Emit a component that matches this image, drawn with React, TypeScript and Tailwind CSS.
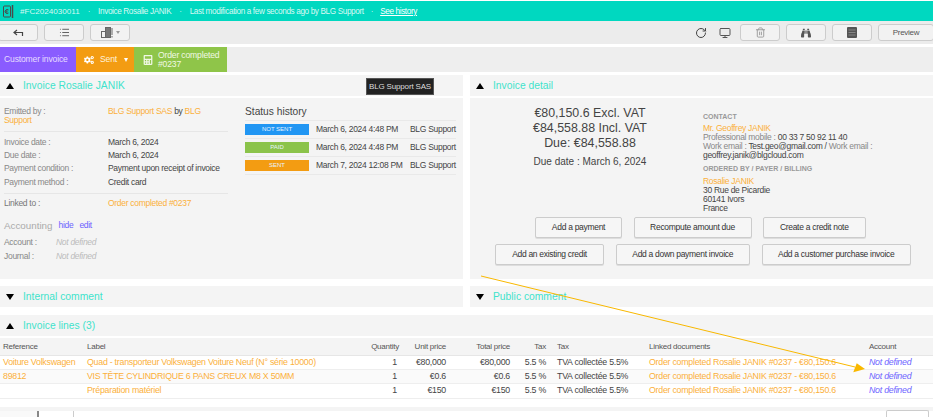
import React from 'react';
import { List, RotateCw, Monitor, Trash2 } from 'lucide-react';
import { FaBinoculars, FaCalculator, FaCogs } from 'react-icons/fa';

const SectionHead = ({ title, open }: { title: string; open?: boolean }) => (
  <div className="h-[21px] bg-[#f4f4f4] flex items-center pl-[6px] gap-[9px]">
    <span className={open ? 'w-0 h-0 border-x-[4px] border-x-transparent border-b-[6px] border-b-black' : 'w-0 h-0 border-x-[4px] border-x-transparent border-t-[6px] border-t-black'} />
    <span className="text-[10.3px] tracking-normal text-[#3fe3cb]">{title}</span>
  </div>
);

const ToolBtn = ({ children, w = 'w-[40px]' }: { children: React.ReactNode; w?: string }) => (
  <div className={`${w} h-[17px] border border-[#ccc] rounded-[3px] bg-[#f2f2f2] flex items-center justify-center text-[#555]`}>{children}</div>
);

const InfoRow = ({ label, children }: { label: string; children: React.ReactNode }) => (
  <div className="flex h-[13.3px] items-center whitespace-nowrap">
    <span className="w-[104px] text-[#888]">{label}</span>
    <span className="text-[#444]">{children}</span>
  </div>
);

const History = ({ badge, color, date }: { badge: string; color: string; date: string }) => (
  <div className="flex items-center h-[18px] border-b border-[#e9e9e9] text-[#444] whitespace-nowrap">
    <span className={`${color} w-[64px] h-[11px] text-[#e8f4ff] text-[6px] tracking-normal flex items-center justify-center`}>{badge}</span>
    <span className="ml-[7px] w-[94px]">{date}</span>
    <span>BLG Support</span>
  </div>
);

const Btn = ({ label, w }: { label: string; w: string }) => (
  <div className={`${w} h-[21px] border border-[#ccc] rounded-[2px] bg-[#f6f6f6] flex items-center justify-center text-[#333] shadow-[0_1px_0_#ddd] whitespace-nowrap`}>{label}</div>
);

const lines = [
  { ref: 'Voiture Volkswagen', label: 'Quad - transporteur Volkswagen Voiture Neuf (N° série 10000)', unit: '€80,000', bg: 'bg-white' },
  { ref: '89812', label: 'VIS TÊTE CYLINDRIQUE 6 PANS CREUX M8 X 50MM', unit: '€0.6', bg: 'bg-[#fafafa]' },
  { ref: '', label: 'Préparation matériel', unit: '€150', bg: 'bg-white' },
];

export default function App() {
  return (
    <div className="relative w-[933px] h-[417px] overflow-hidden bg-white text-[8.5px] tracking-[-0.035em] leading-[9px] font-['Liberation_Sans',Arial,sans-serif]">
      {/* Top bar */}
      <div className="mt-[1px] h-[20px] bg-[#00d8c0] flex items-center pl-[3px] text-[8.2px] tracking-[-0.045em] whitespace-nowrap">
        <svg width="11" height="15" viewBox="0 0 11 15" fill="none" stroke="#4a4a4a" strokeWidth="1" className="mr-[6px]">
          <rect x="0.5" y="2" width="7" height="11" rx="1" />
          <path d="M9.5 1v13" strokeWidth="1.5" />
          <path d="M5.5 6a2 2 0 1 0 0 3M2.5 7h2M2.5 8h2" />
        </svg>
        <span className="text-[#d8f8f3] text-[8.1px] tracking-normal">#FC2024030011</span>
        <span className="mx-[8px] text-[#bff3ea]">·</span>
        <span className="text-[#d8f8f3]">Invoice Rosalie JANIK</span>
        <span className="mx-[8px] text-[#bff3ea]">·</span>
        <span className="text-[#d8f8f3]">Last modification a few seconds ago by BLG Support</span>
        <span className="mx-[7px] text-[#bff3ea]">·</span>
        <span className="underline text-white">See history</span>
      </div>
      {/* Toolbar */}
      <div className="h-[23px] bg-[#ececec] flex items-center justify-between">
        <div className="flex items-center gap-[6px] -ml-[2px]">
          <ToolBtn>
            <svg width="11" height="8" viewBox="0 0 11 8" fill="none" stroke="#444" strokeWidth="1.2">
              <path d="M4 1L1 3.5L4 6M1 3.5h8.5V7" />
            </svg>
          </ToolBtn>
          <ToolBtn><List size={11} /></ToolBtn>
          <ToolBtn>
            <svg width="12" height="11" viewBox="0 0 12 11" fill="none" stroke="#666" strokeWidth="1">
              <rect x="0.5" y="4.5" width="4" height="6" />
              <rect x="4.5" y="0.5" width="5" height="10" fill="#777" />
              <path d="M11 1v7M11 9v1.5" />
            </svg>
            <span className="ml-[3px] w-0 h-0 border-x-[2.5px] border-x-transparent border-t-[3px] border-t-[#999]" />
          </ToolBtn>
        </div>
        <div className="flex items-center">
          <RotateCw size={12} strokeWidth={2} className="text-[#444] mr-[12px]" />
          <Monitor size={12} className="text-[#555] mr-[9px]" />
          <div className="flex gap-[6px] -mr-[1px]">
            <ToolBtn><Trash2 size={11} className="text-[#999]" /></ToolBtn>
            <ToolBtn><FaBinoculars size={10} /></ToolBtn>
            <ToolBtn>
              <svg width="10" height="11" viewBox="0 0 10 11" fill="#555">
                <rect x="0" y="0" width="10" height="11" rx="1" />
                <path d="M1.5 3h7M1.5 5.5h7M1.5 8h7" stroke="#aaa" strokeWidth="0.6" />
              </svg>
            </ToolBtn>
            <ToolBtn w="w-[56px]"><span className="text-[#555] text-[8px]">Preview</span></ToolBtn>
          </div>
        </div>
      </div>
      {/* Status tabs */}
      <div className="mt-[3px] h-[25px] bg-[#eeeeee] flex text-[8.6px] tracking-[-0.02em] whitespace-nowrap">
        <div className="w-[76px] bg-[#8a5cff] flex items-center pl-[4px] text-[#e6dcff]">Customer invoice</div>
        <div className="w-[58px] bg-[#f39c12] flex items-center pl-[8px] gap-[6px] text-[#fff2dc]">
          <FaCogs size={10} className="text-white" />
          <span>Sent</span>
          <span className="ml-[1px] w-0 h-0 border-x-[2.5px] border-x-transparent border-t-[4px] border-t-white" />
        </div>
        <div className="w-[93px] bg-[#8fc549] flex items-center pl-[9px] gap-[5px] text-[#f0f8e4]">
          <FaCalculator size={10} />
          <span className="leading-[9px]">Order completed<br />#0237</span>
        </div>
      </div>
      {/* Main panels */}
      <div className="mt-[3px] grid grid-cols-[463px_463px] gap-x-[7px]">
        <div>
          <SectionHead title="Invoice Rosalie JANIK" open />
          <div className="mt-[2px] h-[181px] bg-[#f4f4f4] px-[4px] pt-[9px] flex">
            <div className="w-[224px]">
              <div className="pb-[6px] border-b border-[#e6e6e6] text-[#fbb03b]">
                <span className="inline-block w-[104px] text-[#888]">Emitted by :</span>
                BLG Support SAS <span className="text-[#444]">by</span> BLG<br />Support
              </div>
              <div className="border-b border-[#e6e6e6] pt-[3.5px] pb-[4px]">
                <InfoRow label="Invoice date :">March 6, 2024</InfoRow>
                <InfoRow label="Due date :">March 6, 2024</InfoRow>
                <InfoRow label="Payment condition :">Payment upon receipt of invoice</InfoRow>
                <InfoRow label="Payment method :">Credit card</InfoRow>
              </div>
              <div className="pt-[5.5px] flex">
                <span className="w-[104px] text-[#777]">Linked to :</span>
                <span className="text-[#fbb03b]">Order completed #0237</span>
              </div>
              <div className="mt-[9.5px] flex items-center h-[16px]">
                <span className="text-[9.8px] tracking-normal text-[#aaa]">Accounting</span>
                <span className="ml-[6px] text-[#6c63ff]">hide</span>
                <span className="ml-[6px] text-[#6c63ff]">edit</span>
              </div>
              <div className="mt-[2.4px] flex h-[13.3px] items-center">
                <span className="w-[52px] text-[#888]">Account :</span>
                <span className="italic text-[#bbb]">Not defined</span>
              </div>
              <div className="flex h-[13.3px] items-center">
                <span className="w-[52px] text-[#888]">Journal :</span>
                <span className="italic text-[#bbb]">Not defined</span>
              </div>
            </div>
            <div className="ml-[17px] w-[211px] -mt-[1px]">
              <div className="text-[10.2px] tracking-normal leading-[12px] text-[#444] mb-[2px]">Status history</div>
              <div className="border-t border-[#e9e9e9]">
                <History badge="NOT SENT" color="bg-[#2196f3]" date="March 6, 2024 4:48 PM" />
                <History badge="PAID" color="bg-[#8bc34a]" date="March 6, 2024 4:48 PM" />
                <History badge="SENT" color="bg-[#f39c12]" date="March 7, 2024 12:08 PM" />
              </div>
            </div>
          </div>
        </div>
        <div>
          <SectionHead title="Invoice detail" open />
          <div className="mt-[2px] h-[181px] bg-[#f4f4f4] pt-[7px]">
            <div className="flex h-[112px]">
              <div className="w-[240px] text-center text-[#444] text-[12.4px] tracking-normal leading-[15px]">
                <div className="mt-[1px]">€80,150.6 Excl. VAT</div>
                <div>€84,558.88 Incl. VAT</div>
                <div>Due: €84,558.88</div>
                <div className="mt-[5px] text-[10px] leading-[12px]">Due date : March 6, 2024</div>
              </div>
              <div className="-ml-[7px] pt-[7.5px] leading-[8.8px] text-[#444]">
                <div className="text-[7px] tracking-normal font-bold text-[#999] mb-[3px]">CONTACT</div>
                <div className="text-[#fbb03b]">Mr. Geoffrey JANIK</div>
                <div><span className="text-[#888]">Professional mobile : </span>00 33 7 50 92 11 40</div>
                <div><span className="text-[#888]">Work email : </span>Test.geo@gmail.com / <span className="text-[#888]">Work email :</span></div>
                <div>geoffrey.janik@blgcloud.com</div>
                <div className="text-[7px] tracking-normal font-bold text-[#999] mt-[6px] mb-[3px]">ORDERED BY / PAYER / BILLING</div>
                <div className="text-[#fbb03b]">Rosalie JANIK</div>
                <div>30 Rue de Picardie</div>
                <div>60141 Ivors</div>
                <div>France</div>
              </div>
            </div>
            <div className="flex gap-[11.5px] pl-[65px]">
              <Btn label="Add a payment" w="w-[87px]" />
              <Btn label="Recompute amount due" w="w-[118px]" />
              <Btn label="Create a credit note" w="w-[102.5px]" />
            </div>
            <div className="mt-[6px] flex gap-[11.5px] pl-[25px]">
              <Btn label="Add an existing credit" w="w-[109px]" />
              <Btn label="Add a down payment invoice" w="w-[134.5px]" />
              <Btn label="Add a customer purchase invoice" w="w-[149.5px]" />
            </div>
          </div>
        </div>
        <div className="mt-[7px]"><SectionHead title="Internal comment" /></div>
        <div className="mt-[7px]"><SectionHead title="Public comment" /></div>
      </div>
      {/* Invoice lines */}
      <div className="mt-[8px]">
        <SectionHead title="Invoice lines (3)" open />
        <table className="mt-[2px] w-[933px] table-fixed border-collapse text-[8.8px] tracking-[-0.028em] text-[#444]">
          <colgroup>
            <col className="w-[87px]" /><col className="w-[265px]" /><col className="w-[47px]" /><col className="w-[47px]" />
            <col className="w-[64px]" /><col className="w-[36px]" /><col className="w-[11px]" /><col className="w-[92px]" />
            <col className="w-[220px]" /><col className="w-[64px]" />
          </colgroup>
          <thead>
            <tr className="h-[17px] bg-[#f4f4f4] border-b border-[#e6e6e6] text-[8px] tracking-[-0.03em] text-[#555]">
              <th className="font-normal text-left pl-[3px]">Reference</th>
              <th className="font-normal text-left">Label</th>
              <th className="font-normal text-right">Quantity</th>
              <th className="font-normal text-right">Unit price</th>
              <th className="font-normal text-right">Total price</th>
              <th className="font-normal text-right">Tax</th>
              <th />
              <th className="font-normal text-left">Tax</th>
              <th className="font-normal text-left">Linked documents</th>
              <th className="font-normal text-left">Account</th>
            </tr>
          </thead>
          <tbody>
            {lines.map((l) => (
              <tr key={l.label} className={`h-[14.4px] border-b border-[#eee] ${l.bg}`}>
                <td className="pl-[3px] text-[#fbb03b] whitespace-nowrap">{l.ref}</td>
                <td className="text-[#fbb03b] whitespace-nowrap">{l.label}</td>
                <td className="text-right pr-[2px]">1</td>
                <td className="text-right">{l.unit}</td>
                <td className="text-right">{l.unit}</td>
                <td className="text-right">5.5 %</td>
                <td />
                <td className="whitespace-nowrap">TVA collectée 5.5%</td>
                <td className="text-[#fbb03b] whitespace-nowrap">Order completed Rosalie JANIK #0237 - €80,150.6</td>
                <td className="italic text-[#6c63ff] whitespace-nowrap">Not defined</td>
              </tr>
            ))}
          </tbody>
        </table>
      </div>
      {/* Footer strip */}
      <div className="mt-[8px] h-[4px] bg-[#f4f4f4]" />
      <div className="flex justify-between h-[10px]">
        <div className="w-[37px] bg-[#f9f9f9]" />
        <div className="w-[37px] border-l-2 border-[#888] border-r border-r-[#ccc]" />
        <div className="flex-1" />
        <div className="w-[43px] mr-[4px] border border-b-0 border-[#ccc] rounded-t-[2px] -mt-[1px]" />
      </div>
      {/* Tooltip */}
      <div className="absolute left-[366px] top-[78px] w-[68px] h-[17px] bg-[#222] border border-[#555] text-[#ddd] text-[8px] tracking-[-0.02em] flex items-center justify-center whitespace-nowrap">BLG Support SAS</div>
      {/* Annotation arrow */}
      <svg className="absolute left-0 top-0 pointer-events-none" width="933" height="417" fill="none">
        <path d="M481 276L855 367" stroke="#f9b800" strokeWidth="1" />
        <path d="M856.7 363.3L865 369L853.3 372.3Z" fill="#f9b800" />
      </svg>
    </div>
  );
}
